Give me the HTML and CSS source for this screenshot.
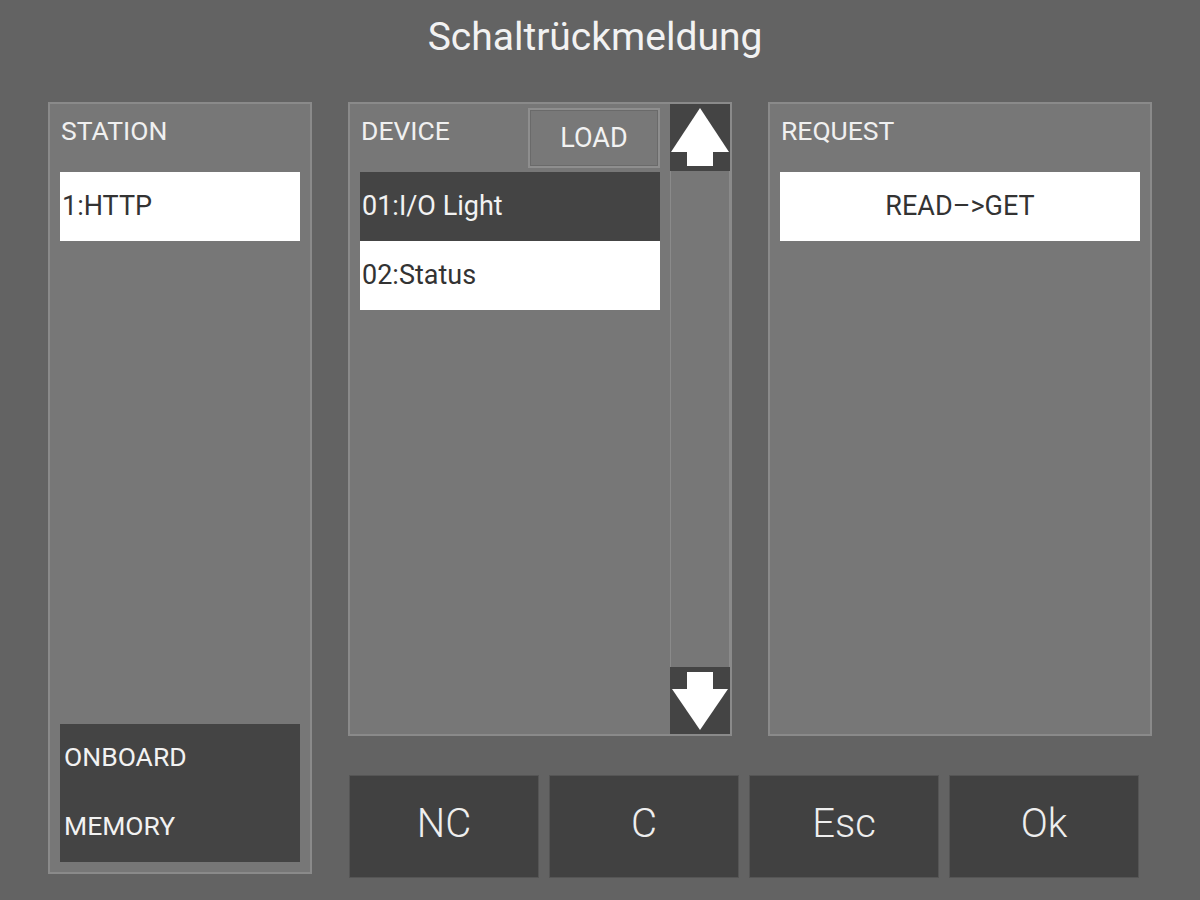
FILE: index.html
```html
<!doctype html>
<html>
<head>
<meta charset="utf-8">
<title>Schaltrückmeldung</title>
<link rel="stylesheet" href="styles.css">
</head>
<body>
	<div class="title">Schaltrückmeldung</div>
	<div class="main">
		<div class="panel station">
			<div class="head"><span class="label">STATION</span></div>
			<div class="item light">1:HTTP</div>
			<div class="memory">
				<div class="mem_row">ONBOARD</div>
				<div class="mem_row">MEMORY</div>
			</div>
		</div>
		<div class="panel device">
			<div class="list">
				<div class="head">
					<span class="label">DEVICE</span>
					<span class="load">LOAD</span>
				</div>
				<div class="item dark">01:I/O Light</div>
				<div class="item light">02:Status</div>
			</div>
			<div class="scroll">
				<div class="arrow">
					<svg width="60" height="67" viewBox="0 0 60 67">
						<polygon points="30,4 1,48 59,48" fill="#fff"/>
						<rect x="17" y="47" width="26" height="15" fill="#fff"/>
					</svg>
				</div>
				<div class="track"></div>
				<div class="arrow">
					<svg width="60" height="67" viewBox="0 0 60 67">
						<rect x="17" y="5" width="26" height="18" fill="#fff"/>
						<polygon points="2,22 58,22 30,63" fill="#fff"/>
					</svg>
				</div>
			</div>
		</div>
		<div class="panel request">
			<div class="head"><span class="label">REQUEST</span></div>
			<div class="item light center">READ&ndash;&gt;GET</div>
		</div>
		<div class="buttons">
			<div class="btn">NC</div>
			<div class="btn">C</div>
			<div class="btn">Esc</div>
			<div class="btn">Ok</div>
		</div>
	</div>
</body>
</html>
```
FILE: styles.css
```css
body{ margin:0; background:#636363; font-family:Roboto, 'Liberation Sans', sans-serif; color:#eee; width:1200px; height:900px; overflow:hidden;}
.title{ height:102px; line-height:74px; text-align:center; font-size:39px; color:#f2f2f2; padding-right:10px;}
.main{ display:grid; grid-template-columns:264px 384px 384px; grid-template-rows:634px auto; column-gap:36px; padding-left:48px;}
.panel{ background:#777; border:2px solid #8a8a8a; box-sizing:border-box;}
.head{ height:68px; display:flex; align-items:flex-start; justify-content:space-between;}
.label{ font-size:26.5px; line-height:54px; padding-left:1px; color:#f0f0f0;}
.item{ height:69px; line-height:69px; font-size:27px; padding-left:2px;}
.item.light{ background:#fff; color:#333;}
.item.dark{ background:#444; color:#f2f2f2;}
.item.center{ text-align:center; padding-left:0;}

.station{ grid-row:1 / span 2; height:772px; padding:0 10px 10px; display:flex; flex-direction:column;}
.memory{ margin-top:auto; background:#444; height:138px;}
.mem_row{ height:69px; line-height:65px; font-size:26.5px; padding-left:4px; color:#f2f2f2;}

.device{ display:flex;}
.device .list{ width:300px; padding:0 10px;}
.load{ margin-top:4px; width:132px; height:60px; box-sizing:border-box; border:2px solid #8e8e8e; box-shadow:inset 0 0 0 1px #6a6a6a; background:#787878; text-align:center; line-height:56px; font-size:27px; color:#f2f2f2;}
.scroll{ width:60px; display:flex; flex-direction:column;}
.arrow{ height:67px; background:#444;}
.arrow svg{ display:block;}
.track{ flex:1; border:1px solid #8a8a8a; border-top:0; border-bottom:0;}

.request{ padding:0 10px;}

.buttons{ grid-column:2 / span 2; display:flex; gap:10px; margin-top:39px; padding-left:1px;}
.btn{ width:190px; height:103px; box-sizing:border-box; background:#414141; border:1px solid #555; text-align:center; line-height:96px; font-size:40px; font-weight:300; color:#eee;}
```
